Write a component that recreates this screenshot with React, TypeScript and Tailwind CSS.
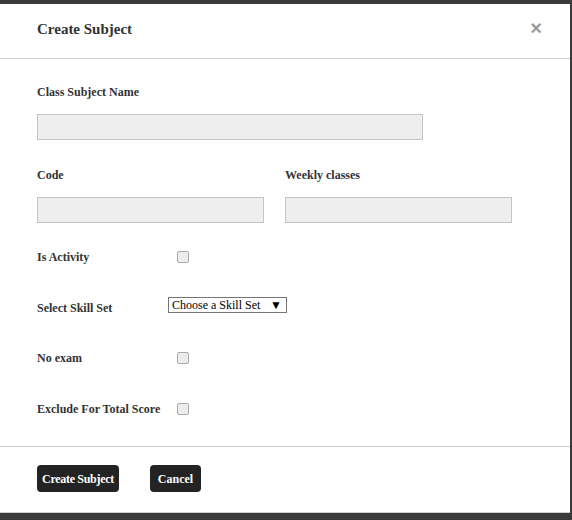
const Checkbox = () => (
  <span className="inline-block w-[12px] h-[12px] rounded-[2px] border border-[#a9a9a9] bg-[#ececec]" />
);

const Field = ({ label, width }: { label: string; width: string }) => (
  <div className="flex flex-col">
    <label className="text-[12px] leading-[16px] font-bold text-[#333]">{label}</label>
    <div className={`mt-[14px] h-[26px] ${width} border border-[#c4c4c4] bg-[#eeeeee]`} />
  </div>
);

export default function App() {
  return (
    <div className="w-[572px] h-[520px] bg-[#3a3a3a] pt-[4px] pr-[2px] font-['Liberation_Serif',serif]">
      <div className="bg-white h-[509px] border-b border-[#cfcfcf] flex flex-col">
        {/* Header */}
        <div className="h-[55px] border-b border-[#cfcfcf] flex items-center justify-between pl-[37px] pr-[28px]">
          <h2 className="text-[15px] font-bold text-[#333] mt-[-3px]">Create Subject</h2>
          <span className="text-[20px] leading-none font-bold text-[#9a9a9a] font-['Liberation_Sans',sans-serif] mt-[-6px]">
            ×
          </span>
        </div>

        {/* Body */}
        <div className="flex-1 pl-[37px] pt-[25px] border-b border-[#cfcfcf]">
          <Field label="Class Subject Name" width="w-[386px]" />

          <div className="flex gap-[21px] mt-[27px]">
            <Field label="Code" width="w-[227px]" />
            <Field label="Weekly classes" width="w-[227px]" />
          </div>

          <div className="flex items-center h-[16px] mt-[26px]">
            <span className="w-[140px] text-[12px] font-bold text-[#333]">Is Activity</span>
            <Checkbox />
          </div>

          <div className="flex items-start mt-[32px]">
            <span className="w-[131px] mt-[3px] text-[12px] leading-[16px] font-bold text-[#333]">Select Skill Set</span>
            <div className="h-[16px] w-[119px] border border-[#767676] flex items-center justify-between px-[3px] text-[12px] text-black">
              <span>Choose a Skill Set</span>
              <span className="text-[12px] pr-[1px]">▼</span>
            </div>
          </div>

          <div className="flex items-center h-[16px] mt-[34px]">
            <span className="w-[140px] text-[12px] font-bold text-[#333]">No exam</span>
            <Checkbox />
          </div>

          <div className="flex items-center h-[16px] mt-[35px]">
            <span className="w-[140px] text-[12px] font-bold text-[#333]">Exclude For Total Score</span>
            <Checkbox />
          </div>
        </div>

        {/* Footer */}
        <div className="h-[65px] flex items-start pt-[18px] pl-[37px] gap-[31px]">
          <button className="h-[27px] w-[82px] rounded-[4px] bg-[#232323] text-white text-[12px] font-bold whitespace-nowrap tracking-[-0.3px]">
            Create Subject
          </button>
          <button className="h-[27px] w-[51px] rounded-[4px] bg-[#232323] text-white text-[12px] font-bold">
            Cancel
          </button>
        </div>
      </div>
    </div>
  );
}
